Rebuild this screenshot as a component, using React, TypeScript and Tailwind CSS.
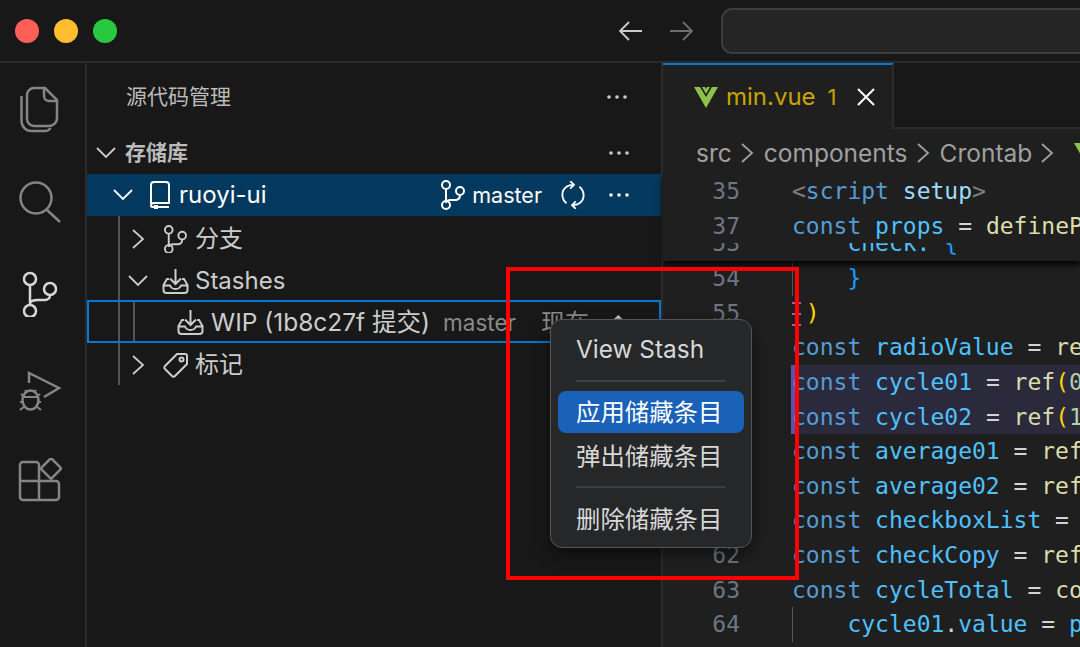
const ui = "font-['Inter','Noto_Sans_CJK_SC',sans-serif]";

function Dots({ className = "" }: { className?: string }) {
  return (
    <svg width="20" height="4" viewBox="0 0 20 4" className={`shrink-0 ${className}`}>
      <circle cx="2" cy="2" r="1.8" fill="currentColor" />
      <circle cx="10" cy="2" r="1.8" fill="currentColor" />
      <circle cx="18" cy="2" r="1.8" fill="currentColor" />
    </svg>
  );
}

function Chevron({ open }: { open: boolean }) {
  return (
    <svg width="20" height="20" viewBox="0 0 20 20" fill="none" stroke="currentColor" strokeWidth="1.8" className="shrink-0">
      {open ? <path d="M1 5l9 9 9-9" /> : <path d="M4 1l10 9-10 9" />}
    </svg>
  );
}

function BranchIcon({ size = 25 }: { size?: number }) {
  return (
    <svg width={size} height={size * 1.2} viewBox="0 0 25 30" fill="none" stroke="currentColor" strokeWidth="2" className="shrink-0">
      <circle cx="6" cy="5" r="4" />
      <circle cx="20" cy="11" r="4" />
      <circle cx="6" cy="25" r="4" />
      <path d="M6 9v12M20 15c0 3-2 5-5 5h-4c-3 0-5 1-5 3" />
    </svg>
  );
}

function StashIcon() {
  return (
    <svg width="27" height="25" viewBox="0 0 27 25" fill="none" stroke="currentColor" strokeWidth="2" className="shrink-0">
      <path d="M13.5 0v15M8 9.500l5.500 5.500L19 9.500" />
      <path d="M7 10H5L1.500 16v5a3 3 0 0 0 3 3h18a3 3 0 0 0 3-3v-5L22 10h-2M1.500 16.500H8c1 2.500 3 3.500 5.500 3.500s4.500-1 5.500-3.500h6.500" />
    </svg>
  );
}

function FilesIcon() {
  return (
    <svg width="40" height="48" viewBox="20 86 40 48" fill="none" stroke="#858585" strokeWidth="2.5">
      <path d="M34 88h11l12 12v18a8 8 0 0 1-8 8H34a7 7 0 0 1-7-7V95a7 7 0 0 1 7-7z" />
      <path d="M44 88v8a5 5 0 0 0 5 5h8" />
      <path d="M21.500 96v25a10 10 0 0 0 10 10h14a6 6 0 0 0 5-3" />
    </svg>
  );
}

function SearchIcon() {
  return (
    <svg width="42" height="42" viewBox="19 182 42 42" fill="none" stroke="#858585" strokeWidth="2.5">
      <circle cx="36" cy="199" r="15.500" />
      <path d="M47 211l13 12" />
    </svg>
  );
}

function GitIcon() {
  return (
    <svg width="38" height="46" viewBox="21 270 38 46" fill="none" stroke="#d7d7d7" strokeWidth="2.500">
      <circle cx="30" cy="278" r="6" />
      <circle cx="50" cy="288" r="6" />
      <circle cx="30" cy="310" r="6" />
      <path d="M30 284v20M50 294c0 3-2 5-5 5h-7c-4 0-8 1-8 4" />
    </svg>
  );
}

function DebugIcon() {
  return (
    <svg width="44" height="44" viewBox="16 369 44 44" fill="none" stroke="#858585" strokeWidth="2.500">
      <path d="M27 382v-10l30 15-15 9" />
      <ellipse cx="28.500" cy="399" rx="8" ry="9.500" />
      <path d="M21 396h15M23 389l2 3M34 389l-2 3M19 393l4 3M38 393l-4 3M18 401h4M35 401h4M18 409l5-4M39 409l-5-4" strokeWidth="2" />
    </svg>
  );
}

function ExtIcon() {
  return (
    <svg width="44" height="44" viewBox="19 457 44 44" fill="none" stroke="#858585" strokeWidth="2.500">
      <path d="M40 480v-16a3 3 0 0 0-3-3H24a3 3 0 0 0-3 3v32a3 3 0 0 0 3 3h33a3 3 0 0 0 3-3V483a3 3 0 0 0-3-3z" />
      <path d="M21 480h19v19" />
      <path d="M52 457l9.500 9.500a1.500 1.500 0 0 1 0 2L52 478l-9.500-9.500a1.500 1.500 0 0 1 0-2z" />
    </svg>
  );
}

function VueIcon() {
  return (
    <svg width="24" height="21" viewBox="0 0 24 21" fill="#8dc149" className="shrink-0">
      <path d="M0 0h6l6 10L18 0h6L12 21z" />
      <path d="M8 0h3l1 2 1-2h3l-4 7z" />
    </svg>
  );
}

type Tok = [string, string];
const KW = "text-[#569cd6]";
const VAR = "text-[#4fc1ff]";
const FN = "text-[#dcdcaa]";
const OP = "text-[#d4d4d4]";
const YEL = "text-[#ffd700]";
const NUM = "text-[#b5cea8]";

function decl(name: string, rest: Tok[]): Tok[] {
  return [["const ", KW], [name, VAR], [" = ", OP], ...rest];
}

const lines: { n: string; toks: Tok[]; changed?: boolean; guide?: boolean; removed?: boolean }[] = [
  { n: "54", guide: true, toks: [["    ", OP], ["}", "text-[#179fff]"]] },
  { n: "55", removed: true, toks: [[" ", OP], [")", YEL]] },
  { n: "", toks: decl("radioValue", [["ref", FN], ["(", YEL], ["1", NUM], [")", YEL]]) },
  { n: "", changed: true, toks: decl("cycle01", [["ref", FN], ["(", YEL], ["0", NUM], [")", YEL]]) },
  { n: "", changed: true, toks: decl("cycle02", [["ref", FN], ["(", YEL], ["1", NUM], [")", YEL]]) },
  { n: "", toks: decl("average01", [["ref", FN], ["(", YEL], ["0", NUM], [")", YEL]]) },
  { n: "", toks: decl("average02", [["ref", FN], ["(", YEL], ["1", NUM], [")", YEL]]) },
  { n: "", toks: decl("checkboxList", [["ref", FN], ["(", YEL], ["[]", NUM], [")", YEL]]) },
  { n: "62", toks: decl("checkCopy", [["ref", FN], ["(", YEL], ["[", NUM], ["0", NUM], ["]", NUM], [")", YEL]]) },
  { n: "63", toks: decl("cycleTotal", [["computed", FN], ["(", YEL], ["()", OP], [")", YEL]]) },
  { n: "64", guide: true, toks: [["    ", OP], ["cycle01", VAR], [".", OP], ["value", VAR], [" = ", OP], ["props", VAR]] },
];

function CodeRow({ n, toks, changed, guide, removed }: (typeof lines)[number]) {
  return (
    <div className="relative flex h-[34.6px] items-center leading-[34.6px]">
      {changed && <span className="absolute bottom-0 left-[128px] right-0 top-0 border-l-[7px] border-[#5a54a8] bg-[#2a2a3c]" />}
      <span className="w-[77px] shrink-0 text-right text-[#6e7681]">{n}</span>
      <span className="relative ml-[52px] whitespace-pre">
        {toks.map(([t, c], i) => (
          <span key={i} className={c}>{t}</span>
        ))}
      </span>
      {guide && <span className="absolute left-[129px] top-0 h-full w-px bg-[#555555]" />}
      {removed && (
        <span className="absolute left-[129px] top-[6px] flex h-[24px] w-[9px] flex-col justify-between">
          <span className="h-[2px] bg-[#d04aa0]" />
          <span className="h-[2px] bg-[#d04aa0]" />
          <span className="h-[2px] bg-[#d04aa0]" />
        </span>
      )}
    </div>
  );
}

function MenuItem({ label, active, className = "" }: { label: string; active?: boolean; className?: string }) {
  return (
    <div className={`flex h-[42px] items-center rounded-lg pl-[18px] text-[24.4px] ${active ? "bg-[#1a62b8] text-white" : "text-[#d8d8d8]"} ${className}`}>
      {label}
    </div>
  );
}

export default function App() {
  return (
    <div className={`relative h-[647px] w-[1080px] overflow-hidden bg-[#181818] ${ui}`}>
      {/* Title bar */}
      <div className="flex h-[63px] items-center border-b-2 border-[#2b2b2b] pl-[15px]">
        <div className="flex gap-[15px]">
          <span className="h-[24px] w-[24px] rounded-full bg-[#ff5f57]" />
          <span className="h-[24px] w-[24px] rounded-full bg-[#febc2e]" />
          <span className="h-[24px] w-[24px] rounded-full bg-[#28c840]" />
        </div>
        <svg width="24" height="20" viewBox="0 0 24 20" fill="none" stroke="#cccccc" strokeWidth="1.800" className="ml-[502px] shrink-0">
          <path d="M23 10H2M10 1l-9 9 9 9" />
        </svg>
        <svg width="24" height="20" viewBox="0 0 24 20" fill="none" stroke="#6e6e6e" strokeWidth="1.800" className="ml-[26px] shrink-0">
          <path d="M1 10h21M14 1l9 9-9 9" />
        </svg>
        <div className="ml-[28px] h-[46px] w-[420px] shrink-0 rounded-[11px] border-2 border-[#3d3d3d] bg-[#252525]" />
      </div>

      <div className="flex h-[584px]">
        {/* Activity bar */}
        <div className="flex w-[87px] shrink-0 flex-col items-center border-r-2 border-[#2b2b2b] pr-[6px] pt-[23px]">
          <FilesIcon />
          <div className="mt-[47px]"><SearchIcon /></div>
          <div className="mt-[48px]"><GitIcon /></div>
          <div className="mt-[53px]"><DebugIcon /></div>
          <div className="mt-[44px]"><ExtIcon /></div>
        </div>

        {/* Source control sidebar */}
        <div className="w-[576px] shrink-0 border-r-2 border-[#2b2b2b] text-[#cccccc]">
          <div className="flex h-[67.5px] items-center justify-between pl-[39px] pr-[34px]">
            <span className="text-[21px] text-[#bbbbbb]">源代码管理</span>
            <Dots />
          </div>
          <div className="flex h-[43px] items-center justify-between pl-[9px] pr-[32px] pt-[2px]">
            <div className="flex items-center gap-[9px]">
              <Chevron open />
              <span className="text-[21px] font-bold text-[#bbbbbb]">存储库</span>
            </div>
            <Dots />
          </div>

          <div className="flex h-[42.300px] items-center justify-between bg-[#03395e] pl-[26px] pr-[32px] text-white">
            <div className="flex items-center">
              <Chevron open />
              <svg width="20" height="28" viewBox="0 0 20 28" fill="none" stroke="currentColor" strokeWidth="2" className="ml-[17px]">
                <path d="M1 23V4a3 3 0 0 1 3-3h12a3 3 0 0 1 3 3v18H4a3 3 0 0 0-3 3 2 2 0 0 0 2 1h16" />
                <rect x="4" y="24" width="4" height="4" fill="currentColor" stroke="none" />
              </svg>
              <span className="ml-[9px] text-[24px]">ruoyi-ui</span>
            </div>
            <div className="flex items-center">
              <BranchIcon />
              <span className="ml-[7px] text-[21.5px]">master</span>
              <svg width="24" height="28" viewBox="0 0 26 30" fill="none" stroke="currentColor" strokeWidth="2" className="ml-[19px] shrink-0">
                <path d="M6 24C0 19 0 10 6 6c2-1.500 4-2 7-2M10 0l4 4-4 4M20 6c6 5 6 14 0 18-2 1.500-4 2-7 2M16 30l-4-4 4-4" />
              </svg>
              <Dots className="ml-[24px]" />
            </div>
          </div>

          <div className="relative flex h-[42.300px] items-center pl-[42px] pt-[4px]">
            <span className="absolute left-[31px] top-0 h-full w-[2px] bg-[#555555]" />
            <Chevron open={false} />
            <span className="ml-[14px]"><BranchIcon size={24} /></span>
            <span className="ml-[8px] text-[24px]">分支</span>
          </div>
          <div className="relative flex h-[42.300px] items-center pl-[41px] pt-[4px]">
            <span className="absolute left-[31px] top-0 h-full w-[2px] bg-[#555555]" />
            <Chevron open />
            <span className="ml-[14px]"><StashIcon /></span>
            <span className="ml-[6px] text-[24px]">Stashes</span>
          </div>
          <div className="relative flex h-[42.300px] items-center whitespace-nowrap border-2 border-[#0078d4] pl-[88px] pt-[2px]">
            <span className="absolute left-[29px] top-0 h-full w-[2px] bg-[#555555]" />
            <span className="absolute left-[44px] top-0 h-full w-[2px] bg-[#555555]" />
            <StashIcon />
            <span className="ml-[7px] text-[24.5px]">WIP (1b8c27f 提交)</span>
            <span className="ml-[13px] text-[22.5px] text-[#8a8a8a]">master</span>
            <span className="ml-[25px] text-[24px] text-[#8a8a8a]">现在</span>
            <span className="ml-[20px] text-[22px] leading-none text-[#cccccc]">↑</span>
          </div>
          <div className="relative flex h-[42.300px] items-center pl-[42px] pt-[2px]">
            <span className="absolute left-[31px] top-0 h-full w-[2px] bg-[#555555]" />
            <Chevron open={false} />
            <svg width="26" height="26" viewBox="0 0 26 26" fill="none" stroke="currentColor" strokeWidth="2" className="ml-[14px] shrink-0">
              <path d="M2 14L14 2h8a2 2 0 0 1 2 2v8L12 24a2 2 0 0 1-3 0l-7-7a2 2 0 0 1 0-3z" />
              <circle cx="18.500" cy="7.500" r="2" />
            </svg>
            <span className="ml-[6px] text-[24px]">标记</span>
          </div>
        </div>

        {/* Editor */}
        <div className="min-w-0 flex-1 bg-[#1f1f1f]">
          <div className="flex h-[66px] bg-[#181818]">
            <div className="flex w-[231px] items-center border-r-2 border-t-2 border-r-[#2b2b2b] border-t-[#0078d4] bg-[#1f1f1f] pl-[31px]">
              <VueIcon />
              <span className="ml-[8px] text-[24px] text-[#c9a400]">min.vue</span>
              <span className="ml-[12px] text-[22px] text-[#c9a400]">1</span>
              <svg width="18" height="18" viewBox="0 0 18 18" fill="none" stroke="#ffffff" strokeWidth="2" className="ml-[20px] shrink-0">
                <path d="M1 1l16 16M17 1L1 17" />
              </svg>
            </div>
            <div className="flex-1 border-b-2 border-[#2b2b2b]" />
          </div>

          <div className="flex h-[45px] items-center gap-[6px] whitespace-nowrap pl-[33px] pt-[3px] text-[24.5px] text-[#a0a0a0]">
            <span>src</span>
            <Chevron open={false} />
            <span>components</span>
            <Chevron open={false} />
            <span>Crontab</span>
            <Chevron open={false} />
            <span className="ml-[10px]"><VueIcon /></span>
          </div>

          <div className="font-['DejaVu_Sans_Mono',monospace] text-[23px]">
            {/* Sticky scroll */}
            <div className="relative z-10 shadow-[0_4px_6px_rgba(0,0,0,0.9)]">
              <div className="flex h-[34.600px] items-center">
                <span className="w-[77px] shrink-0 text-right text-[#6e7681]">35</span>
                <span className="ml-[52px] whitespace-pre text-[#808080]">
                  {"<"}<span className="text-[#569cd6]">script</span> <span className="text-[#9cdcfe]">setup</span>{">"}
                </span>
              </div>
              <div className="flex h-[34.600px] items-center">
                <span className="w-[77px] shrink-0 text-right text-[#6e7681]">37</span>
                <span className="ml-[52px] whitespace-pre">
                  <span className={KW}>const </span><span className={VAR}>props</span><span className={OP}> = </span><span className={FN}>defineProps</span>
                </span>
              </div>
              <div className="h-[18px] overflow-hidden">
                <div className="mt-[-17px] flex h-[34.600px] items-center">
                  <span className="w-[77px] shrink-0 text-right text-[#6e7681]">53</span>
                  <span className="ml-[52px] whitespace-pre">
                    <span className={VAR}>    check: </span><span className="text-[#179fff]">{"{"}</span>
                  </span>
                </div>
              </div>
            </div>
            {lines.map((l, i) => (
              <CodeRow key={i} {...l} />
            ))}
          </div>
        </div>
      </div>

      {/* Context menu */}
      <div className="absolute left-[550px] top-[319px] z-20 h-[229px] w-[202px] rounded-xl border border-[#555555] bg-[#262728] px-[7px] pt-[8px] shadow-[0_6px_16px_rgba(0,0,0,0.5)]">
        <MenuItem label="View Stash" />
        <div className="mx-[18px] mb-[9px] mt-[10px] h-[2px] bg-[#3d3d3d]" />
        <MenuItem label="应用储藏条目" active />
        <MenuItem label="弹出储藏条目" className="mt-[2px]" />
        <div className="mx-[18px] mb-[10px] mt-[9px] h-[2px] bg-[#3d3d3d]" />
        <MenuItem label="删除储藏条目" />
      </div>

      {/* Red annotation */}
      <div className="pointer-events-none absolute left-[506px] top-[267px] z-30 h-[313px] w-[293px] border-[4px] border-[#ff0000]" />
    </div>
  );
}
